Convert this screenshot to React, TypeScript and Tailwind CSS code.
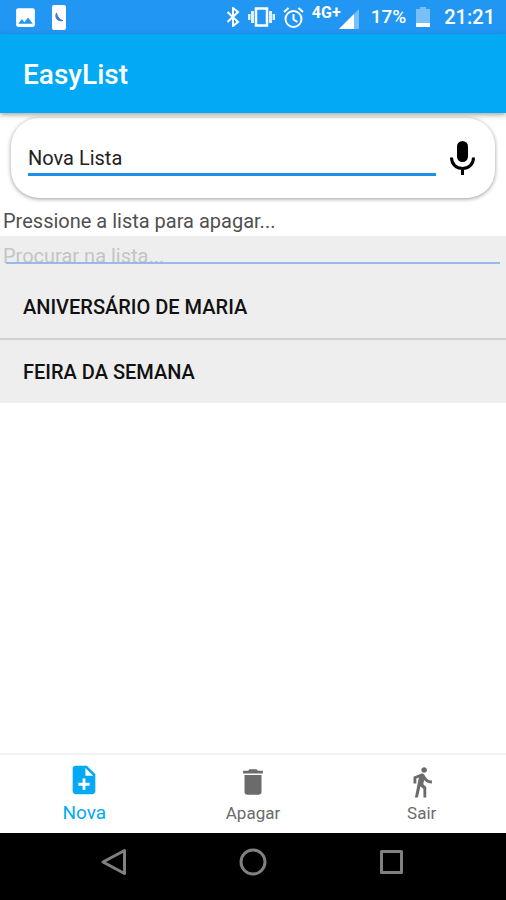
import type { ReactNode } from 'react'
import { MdDelete, MdDirectionsWalk, MdImage, MdNoteAdd } from 'react-icons/md'

const lists = ['ANIVERSÁRIO DE MARIA', 'FEIRA DA SEMANA']

function StatusBar() {
  return (
    <div className="flex h-[34px] items-center justify-between bg-[#2196f3] pr-[11px] pl-[13px] text-white">
      <div className="flex items-center gap-3.5">
        <MdImage size={25} aria-hidden="true" />
        <svg width="14" height="25" viewBox="0 0 14 25" aria-hidden="true">
          <rect width="14" height="25" rx="2" fill="currentColor" />
          <path d="M4.500 8C2.500 12 5 17 11 15.500 7.500 15 5.500 12 4.500 8z" fill="#3f78e0" stroke="#3f78e0" />
        </svg>
      </div>

      <div className="flex items-center">
        {/* Bluetooth */}
        <svg width="14" height="20" viewBox="0 0 14 20" fill="none" stroke="currentColor" strokeWidth="2" aria-hidden="true">
          <path d="M1.500 5l10.500 10-5 4V1l5 4L1.500 15" />
        </svg>
        {/* Vibrate */}
        <svg className="ml-2" width="27" height="20" viewBox="0 0 27 20" aria-hidden="true">
          <path d="M8 1.500h11v17H8z" fill="none" stroke="currentColor" strokeWidth="2.500" />
          <path d="M3 4h3v12H3zM0 7h2.500v6H0zM21 4h3v12h-3zM24.500 7H27v6h-2.500z" fill="currentColor" opacity="0.85" />
        </svg>
        {/* Alarm */}
        <svg className="ml-2" width="21" height="21" viewBox="0 0 21 21" fill="none" stroke="currentColor" strokeWidth="2" aria-hidden="true">
          <circle cx="10.500" cy="12" r="8" />
          <path d="M10.500 7v5.500l4 2.500M1 5l4.500-4M20 5l-4.500-4" />
        </svg>
        <div className="ml-2 flex items-end">
          <span className="pb-2 text-base leading-4 font-bold">4G+</span>
          <svg className="-ml-0.5" width="20" height="20" viewBox="0 0 20 20" aria-hidden="true">
            <path d="M0 20 20 0v20z" fill="currentColor" opacity="0.4" />
            <path d="M0 20 15 5v15z" fill="currentColor" />
          </svg>
        </div>
        <span className="ml-3 text-[19px] leading-5 font-medium">17%</span>
        <svg className="ml-2.5" width="14" height="20" viewBox="0 0 14 20" aria-hidden="true">
          <path d="M4 0h6v2h4v18H0V2h4z" fill="currentColor" opacity="0.4" />
          <path d="M0 16h14v4H0z" fill="currentColor" />
        </svg>
        <span className="ml-3.5 text-xl leading-5 font-medium">21:21</span>
      </div>
    </div>
  )
}

function MicIcon() {
  return (
    <svg width="25" height="34" viewBox="0 0 25 34" fill="none" aria-hidden="true">
      <rect x="7" width="11" height="21" rx="5.500" fill="currentColor" />
      <path d="M1.500 16.500c0 7 5 11 11 11s11-4 11-11M12.500 27v7" stroke="currentColor" strokeWidth="3" />
    </svg>
  )
}

interface TabProps {
  label: string
  icon: ReactNode
  active?: boolean
}

function Tab({ label, icon, active = false }: TabProps) {
  return (
    <button
      type="button"
      aria-current={active ? 'page' : undefined}
      className={
        active
          ? 'flex flex-1 flex-col items-center pt-2 text-[19px] leading-8 text-[#03a9f4]'
          : 'flex flex-1 flex-col items-center pt-2.5 text-[17px] leading-7 text-[#6b6b6b]'
      }
    >
      {icon}
      {label}
    </button>
  )
}

function SystemNav() {
  return (
    <nav
      aria-label="Sistema"
      className="flex h-[67px] items-start justify-center gap-[111px] bg-black pt-[15px] text-[#808080]"
    >
      <button type="button" aria-label="Voltar">
        <svg width="28" height="28" viewBox="0 0 28 28" fill="none" stroke="currentColor" strokeWidth="3" strokeLinejoin="round">
          <path d="M24.500 2.500v23L3 14z" />
        </svg>
      </button>
      <button type="button" aria-label="Início">
        <svg width="28" height="28" viewBox="0 0 28 28" fill="none" stroke="currentColor" strokeWidth="3">
          <circle cx="14" cy="14" r="12" />
        </svg>
      </button>
      <button type="button" aria-label="Recentes">
        <svg width="28" height="28" viewBox="0 0 28 28" fill="none" stroke="currentColor" strokeWidth="3" strokeLinejoin="round">
          <path d="M3.500 3.500h20v21h-20z" />
        </svg>
      </button>
    </nav>
  )
}

export default function App() {
  return (
    <div className="flex min-h-screen flex-col bg-white font-[Roboto,sans-serif]">
      <StatusBar />

      <header className="relative flex h-[79px] items-center bg-[#03a9f4] px-[23px] pt-0.5 shadow-[0_2px_5px_rgba(0,0,0,0.35)]">
        <h1 className="text-[28px] leading-8 font-medium text-white">EasyList</h1>
      </header>

      <main className="flex-1">
        {/* New list */}
        <form className="mx-[11px] mt-[5px] flex h-20 items-center rounded-[28px] bg-white pr-5 pl-[17px] shadow-[0_1px_4px_rgba(0,0,0,0.4)]">
          <input
            type="text"
            aria-label="Nova Lista"
            defaultValue="Nova Lista"
            className="h-9 min-w-0 flex-1 border-b-3 border-[#1e90e8] pt-0.5 text-xl text-[#222] outline-none"
          />
          <button type="button" aria-label="Ditar" className="ml-3.5 text-black">
            <MicIcon />
          </button>
        </form>

        <p className="mt-2 px-[3px] text-xl leading-[30px] text-[#505050]">Pressione a lista para apagar...</p>

        <div className="bg-[#eee]">
          {/* Search, the underline runs across the foot of the text */}
          <div className="relative">
            <input
              type="search"
              aria-label="Procurar na lista"
              placeholder="Procurar na lista..."
              className="block h-[39px] w-full px-[3px] text-xl outline-none placeholder:text-[#c4c4c4]"
            />
            <span className="absolute inset-x-1.5 top-[26px] h-0.5 bg-[#98baea]" />
          </div>

          <ul className="divide-y-2 divide-[#d0d0d0]">
            {lists.map((name) => (
              <li key={name}>
                <button
                  type="button"
                  className="block h-[63px] w-full px-[23px] text-left text-xl font-medium text-[#111]"
                >
                  {name}
                </button>
              </li>
            ))}
          </ul>
        </div>
      </main>

      <nav aria-label="Principal" className="flex h-20 items-start border-t-2 border-[#f3f3f3] bg-white">
        <Tab label="Nova" icon={<MdNoteAdd size={34} aria-hidden="true" />} active />
        <Tab label="Apagar" icon={<MdDelete size={34} aria-hidden="true" />} />
        <Tab label="Sair" icon={<MdDirectionsWalk size={34} aria-hidden="true" />} />
      </nav>

      <SystemNav />
    </div>
  )
}
